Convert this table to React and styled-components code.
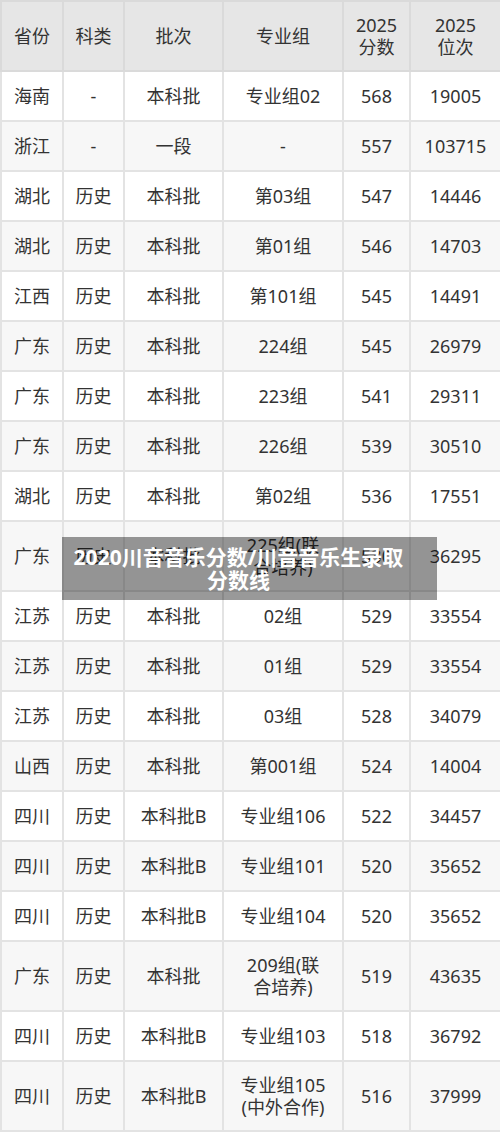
import React from "react";
import styled, { createGlobalStyle } from "styled-components";

const Global = createGlobalStyle`
  html, body { margin: 0; padding: 0; background: #ffffff; }
  body { font-family: "Noto Sans", "Noto Sans CJK SC", sans-serif; }
`;

const Page = styled.div`
  position: relative;
  width: 500px;
  min-height: 1137px;
`;

const Table = styled.table`
  width: 500px;
  border-collapse: collapse;
  table-layout: fixed;
  border: 1px solid #dddddd;
  color: #333333;
  font-size: 18px;
`;

const HeadCell = styled.th`
  background: #e6e6e6;
  border: 2px solid #dadada;
  font-weight: 400;
  line-height: 22px;
  height: 70px;
  padding: 0 2px;
  text-align: center;
  vertical-align: middle;
  box-sizing: border-box;
`;

const Row = styled.tr`
  background: ${(p) => (p.$alt ? "#f7f7f7" : "#ffffff")};
`;

const Cell = styled.td`
  border: 2px solid #e3e3e3;
  text-align: center;
  vertical-align: middle;
  line-height: 22px;
  height: ${(p) => (p.$tall ? 70 : 50)}px;
  padding: 0 2px;
  box-sizing: border-box;
  word-break: break-all;
`;

const Overlay = styled.div`
  position: absolute;
  left: 62px;
  width: 375px;
  top: 537px;
  height: 63px;
  box-sizing: border-box;
  background: rgba(0, 0, 0, 0.4);
  color: #ffffff;
  font-family: "Noto Sans", "Noto Sans CJK SC", sans-serif;
  font-weight: 700;
  font-size: 21px;
  line-height: 23px;
  padding: 8px 30px 8px 8px;
  text-align: center;
  display: flex;
  align-items: center;
  justify-content: center;
`;

const cols = [62, 61, 99, 120, 67, 91];

const rows = [
  ["海南", "-", "本科批", "专业组02", "568", "19005"],
  ["浙江", "-", "一段", "-", "557", "103715"],
  ["湖北", "历史", "本科批", "第03组", "547", "14446"],
  ["湖北", "历史", "本科批", "第01组", "546", "14703"],
  ["江西", "历史", "本科批", "第101组", "545", "14491"],
  ["广东", "历史", "本科批", "224组", "545", "26979"],
  ["广东", "历史", "本科批", "223组", "541", "29311"],
  ["广东", "历史", "本科批", "226组", "539", "30510"],
  ["湖北", "历史", "本科批", "第02组", "536", "17551"],
  ["广东", "历史", "本科批", "225组(联合培养)", "530", "36295", true],
  ["江苏", "历史", "本科批", "02组", "529", "33554"],
  ["江苏", "历史", "本科批", "01组", "529", "33554"],
  ["江苏", "历史", "本科批", "03组", "528", "34079"],
  ["山西", "历史", "本科批", "第001组", "524", "14004"],
  ["四川", "历史", "本科批B", "专业组106", "522", "34457"],
  ["四川", "历史", "本科批B", "专业组101", "520", "35652"],
  ["四川", "历史", "本科批B", "专业组104", "520", "35652"],
  ["广东", "历史", "本科批", "209组(联合培养)", "519", "43635", true],
  ["四川", "历史", "本科批B", "专业组103", "518", "36792"],
  ["四川", "历史", "本科批B", "专业组105(中外合作)", "516", "37999", true],
];

const GroupText = styled.span`
  display: inline-block;
  max-width: ${(p) => p.$max}px;
`;

export default function App() {
  return (
    <Page>
      <Global />
      <Table>
        <colgroup>
          {cols.map((w, i) => (
            <col key={i} style={{ width: w }} />
          ))}
        </colgroup>
        <thead>
          <tr>
            <HeadCell>省份</HeadCell>
            <HeadCell>科类</HeadCell>
            <HeadCell>批次</HeadCell>
            <HeadCell>专业组</HeadCell>
            <HeadCell>2025<br />分数</HeadCell>
            <HeadCell>2025<br />位次</HeadCell>
          </tr>
        </thead>
        <tbody>
          {rows.map((r, i) => (
            <Row key={i} $alt={i % 2 === 1}>
              {r.slice(0, 6).map((c, j) => (
                <Cell key={j} $tall={r[6]}>
                  {j === 3 && r[6] ? (
                    <GroupText $max={c.startsWith("专业组105") ? 90 : 76}>{c}</GroupText>
                  ) : (
                    c
                  )}
                </Cell>
              ))}
            </Row>
          ))}
        </tbody>
      </Table>
      <Overlay>2020川音音乐分数/川音音乐生录取分数线</Overlay>
    </Page>
  );
}
